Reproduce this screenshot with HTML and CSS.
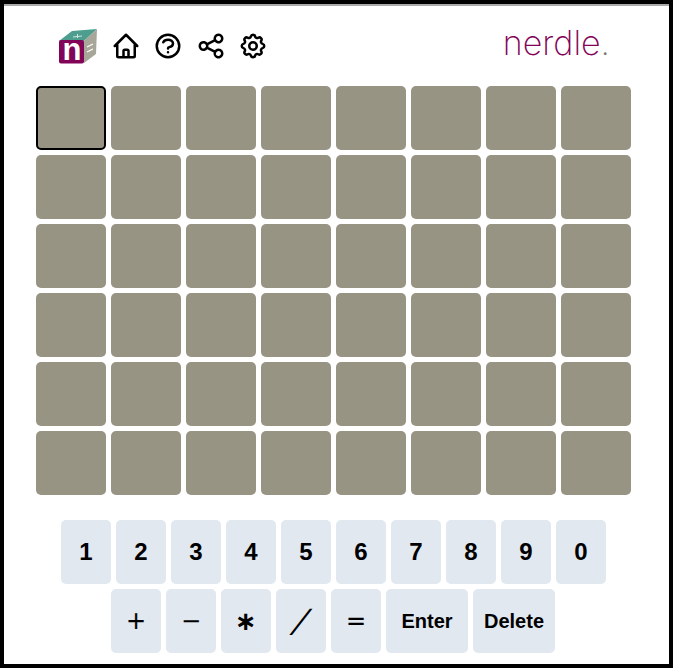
FILE: index.html
```html
<!DOCTYPE html>
<html lang="en-US">
<head>
  <meta charset="UTF-8">
  <meta name="viewport" content="width=device-width">
  <title>nerdle</title>
  <link rel="stylesheet" href="styles.css">
</head>
<body>
<div class="frame">
<div class="page">
  <div class="top">
    <svg class="cube" viewBox="0 0 40 42" width="40" height="42">
      <path d="M1 13 L14 3 L39 1 L26 13 Z" fill="#4d9e8e"/>
      <path d="M26 13 L39 1 L38 26 L26 35 Z" fill="#a8a698"/>
      <rect x="1" y="12" width="25" height="23.5" rx="2" fill="#820458"/>
      <text x="14" y="32" class="cube-n">n</text>
      <path d="M29 19 L35 16 M29 24 L35 21" stroke="#fff" stroke-width="1.2"/>
      <path d="M15 9 L24 8 M19.5 6 L19.5 10" stroke="#cfe6e0" stroke-width="1"/>
    </svg>
    <div class="icons">
      <svg class="ico" viewBox="0 0 24 24"><path d="M3 12l2-2m0 0l7-7 7 7M5 10v10a1 1 0 001 1h3m10-11l2 2m-2-2v10a1 1 0 01-1 1h-3m-6 0a1 1 0 001-1v-4a1 1 0 011-1h2a1 1 0 011 1v4a1 1 0 001 1m-6 0h6"/></svg>
      <svg class="ico" viewBox="0 0 24 24"><path d="M8.228 9c.549-1.165 2.03-2 3.772-2 2.21 0 4 1.343 4 3 0 1.4-1.278 2.575-3.006 2.907-.542.104-.994.54-.994 1.093m0 3h.01M21 12a9 9 0 11-18 0 9 9 0 0118 0z"/></svg>
      <svg class="ico" viewBox="0 0 24 24"><path d="M8.684 13.342C8.886 12.938 9 12.482 9 12c0-.482-.114-.938-.316-1.342m0 2.684a3 3 0 110-2.684m0 2.684l6.632 3.316m-6.632-6l6.632-3.316m0 0a3 3 0 105.367-2.684 3 3 0 00-5.367 2.684zm0 9.316a3 3 0 105.368 2.684 3 3 0 00-5.368-2.684z"/></svg>
      <svg class="ico" viewBox="0 0 24 24"><path d="M10.325 4.317c.426-1.756 2.924-1.756 3.35 0a1.724 1.724 0 002.573 1.066c1.543-.94 3.31.826 2.37 2.37a1.724 1.724 0 001.065 2.572c1.756.426 1.756 2.924 0 3.35a1.724 1.724 0 00-1.066 2.573c.94 1.543-.826 3.31-2.37 2.37a1.724 1.724 0 00-2.572 1.065c-.426 1.756-2.924 1.756-3.35 0a1.724 1.724 0 00-2.573-1.066c-1.543.94-3.31-.826-2.37-2.37a1.724 1.724 0 00-1.065-2.572c-1.756-.426-1.756-2.924 0-3.35a1.724 1.724 0 001.066-2.573c-.94-1.543.826-3.31 2.37-2.37.996.608 2.296.07 2.572-1.065z"/><path d="M15 12a3 3 0 11-6 0 3 3 0 016 0z"/></svg>
    </div>
    <div class="brand">nerdle<span class="dot">.</span></div>
  </div>

  <div class="board" id="board"></div>

  <div class="keys">
    <div class="row">
      <div class="key">1</div><div class="key">2</div><div class="key">3</div><div class="key">4</div><div class="key">5</div>
      <div class="key">6</div><div class="key">7</div><div class="key">8</div><div class="key">9</div><div class="key">0</div>
    </div>
    <div class="row row2">
      <div class="key op">+</div><div class="key op">−</div><div class="key op star">∗</div><div class="key op"><span class="slash">∕</span></div><div class="key op">=</div>
      <div class="key wide">Enter</div><div class="key wide">Delete</div>
    </div>
  </div>
</div>
</div>
<script>
"use strict";
let board = document.getElementById("board")
for (let i = 0; i < 48; i++) {
    let c = document.createElement("div")
    c.className = i == 0 ? "cell active" : "cell"
    board.appendChild(c)
}
</script>
</body>
</html>
```

FILE: styles.css
```css
html, body {
    margin: 0;
    padding: 0;
    background: #fff;
}
.frame {
    box-sizing: border-box;
    width: 673px;
    height: 668px;
    border: 4px solid #000;
    font-family: "Liberation Sans", Arial, sans-serif;
}
.page {
    height: 100%;
    box-sizing: border-box;
    border-top: 2px solid #aaa;
    padding: 0 38px 0 32px;
}
.top {
    display: flex;
    align-items: center;
    height: 80px;
    padding-left: 22px;
    margin-right: 22px;
}
.cube {
    margin-top: 6px;
}
.cube-n {
    font-family: "Liberation Sans", Arial, sans-serif;
    font-size: 31px;
    font-weight: 700;
    text-anchor: middle;
    fill: #fff;
}
.icons {
    display: flex;
    gap: 12.3px;
    margin-left: 13px;
}
.ico {
    width: 30px;
    height: 30px;
    fill: none;
    stroke: #000;
    stroke-width: 2;
    stroke-linecap: round;
    stroke-linejoin: round;
}
.brand {
    margin-left: auto;
    font-family: Inter, sans-serif;
    font-weight: 200;
    font-size: 34px;
    color: #820458;
    line-height: 1;
    margin-top: -7px;
    margin-right: -1px;
}
.dot {
    color: #7a7a70;
}
.board {
    display: grid;
    grid-template-columns: repeat(8, 70px);
    grid-auto-rows: 64px;
    gap: 5px;
}
.cell {
    box-sizing: border-box;
    background: #989484;
    border-radius: 5px;
}
.active {
    border: 2px solid #000;
}
.keys {
    margin-top: 25px;
}
.row {
    display: flex;
    justify-content: center;
    gap: 5px;
    margin-bottom: 5px;
}
.row2 {
    padding-right: 1px;
}
.key {
    width: 50px;
    height: 64px;
    display: flex;
    align-items: center;
    justify-content: center;
    background: #e2e8f0;
    border-radius: 5px;
    font-size: 24px;
    font-weight: 700;
    color: #000;
}
.op {
    font-family: "DejaVu Sans", sans-serif;
    font-size: 24px;
    font-weight: 400;
    -webkit-text-stroke: 0.2px #000;
}
.star {
    font-size: 26px;
    font-weight: 700;
    -webkit-text-stroke: 0;
}
.slash {
    display: inline-block;
    font-size: 32px;
    transform: skewX(-25deg);
    -webkit-text-stroke: 0;
}
.wide {
    width: 82px;
    font-size: 20px;
}
```
